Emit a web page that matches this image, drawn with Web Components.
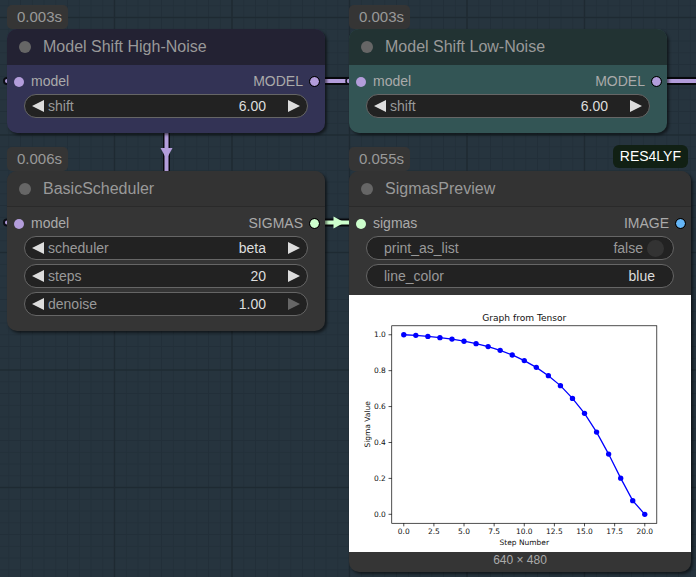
<!DOCTYPE html>
<html lang="en">
<head>
<meta charset="utf-8">
<title>Node graph</title>
<style>
  html, body { margin: 0; height: 100%; }
  body { font-family: "Liberation Sans", Arial, sans-serif; background: #26343e; overflow: hidden; }
</style>
</head>
<body>
<graph-canvas>
  <graph-links></graph-links>
  <graph-node name="Model Shift High-Noise" time="0.003s" style="--x:7px;--y:5px;--w:318px;--head:#232233;--body:#333355;--rule:transparent">
    <node-slots input="model" output="MODEL" style="--in:#b39ddb;--out:#b39ddb"></node-slots>
    <node-widget kind="number" label="shift" value="6.00"></node-widget>
  </graph-node>
  <graph-node name="Model Shift Low-Noise" time="0.003s" style="--x:349px;--y:5px;--w:318px;--head:#223333;--body:#335555;--rule:transparent">
    <node-slots input="model" output="MODEL" style="--in:#b39ddb;--out:#b39ddb"></node-slots>
    <node-widget kind="number" label="shift" value="6.00"></node-widget>
  </graph-node>
  <graph-node name="BasicScheduler" time="0.006s" style="--x:7px;--y:147px;--w:318px">
    <node-slots input="model" output="SIGMAS" style="--in:#b39ddb;--out:#cdffcd"></node-slots>
    <node-widget kind="combo" label="scheduler" value="beta"></node-widget>
    <node-widget kind="number" label="steps" value="20"></node-widget>
    <node-widget kind="number" label="denoise" value="1.00" at-max></node-widget>
  </graph-node>
  <graph-node name="SigmasPreview" time="0.055s" pack="RES4LYF" style="--x:349px;--y:147px;--w:342px">
    <node-slots input="sigmas" output="IMAGE" style="--in:#cdffcd;--out:#64b5f6"></node-slots>
    <node-widget kind="toggle" label="print_as_list" value="false"></node-widget>
    <node-widget kind="text" label="line_color" value="blue"></node-widget>
    <sigma-chart slot="preview"></sigma-chart>
  </graph-node>
</graph-canvas>

<script>
const define = (name, css, render) => customElements.define(name, class extends HTMLElement {
  connectedCallback() {
    if (this.shadowRoot) return;
    const root = this.attachShadow({ mode: "open" });
    root.innerHTML = `<style>:host,*{box-sizing:border-box}${css}</style>${render(this)}`;
  }
});

// Background grid: 20 minor cells per tile, with a major line every 10 drawn on top.
const gridLine = (i, stroke, width) => {
  const p = i * 11.75 + 1;
  return `<path d="M${p} 0V235M0 ${p}H235" stroke="${stroke}" stroke-width="${width}"/>`;
};
const minorLines = Array.from({ length: 20 }, (_, i) => gridLine(i, "#222f39", 1)).join("");
const majorLines = [0, 10].map(i => gridLine(i, "#1e2a32", 1.6)).join("");

define("graph-canvas", `
  :host { display: block; position: relative; width: 100%; min-height: 100vh; overflow: hidden; }
  .grid { position: absolute; inset: 0; width: 100%; height: 100%; }
`, () => `
  <svg class="grid" aria-hidden="true"><defs><pattern id="g" x="-4" y="-101" width="235" height="235" patternUnits="userSpaceOnUse">${minorLines}${majorLines}</pattern></defs>
  <rect width="100%" height="100%" fill="url(#g)"/></svg><slot></slot>`);

define("graph-links", `
  :host { position: absolute; inset: 0; }
  svg { width: 100%; height: 100%; display: block; }
`, () => `
  <svg aria-hidden="true" fill="none">
    <g stroke="#07080c" stroke-width="8"><path d="M314 81H360M656 81H720"/><path d="M166.5 120V180" stroke-width="7"/><path d="M314 222.5H360"/></g>
    <g stroke="#b39ddb" stroke-width="4"><path d="M314 81H360M656 81H720M166.5 120V180"/><path d="M314 222.5H360" stroke="#cdffcd"/></g>
    <path d="M160.5 148H172.5L166.5 159z" fill="#b39ddb"/>
    <path d="M333.5 216.5V228.500L344.5 222.5z" fill="#cdffcd"/>
    <g fill="#b39ddb" stroke="#0b0d14" stroke-width="2"><circle cx="7" cy="81" r="3"/><circle cx="7" cy="222.5" r="3"/><circle cx="349" cy="81" r="3" stroke-width="1.5"/></g>
  </svg>`);

define("graph-node", `
  :host { display: block; position: absolute; left: var(--x); top: var(--y); width: var(--w); color: #999; }
  .badges { display: flex; justify-content: space-between; height: 24px; }
  .time { background: #353535; border-radius: 5px; padding: 0 6px 0 10px; font-size: 15px; line-height: 24px; color: #999; }
  .pack { align-self: center; margin: -5px 3px 0 0; background: #112014; color: #fff; border-radius: 6px; padding: 0 7px; font-size: 14px; line-height: 23px; }
  article { border-radius: 10px; background: var(--body, #353535); box-shadow: 2px 2px 3px rgba(0,0,0,.55); overflow: hidden; }
  header { display: flex; align-items: center; gap: 12px; height: 36px; padding-left: 12px; background: var(--head, #333); border-bottom: 1px solid var(--rule, #2a2a2a); }
  header button { width: 12px; height: 12px; border: 0; padding: 0; border-radius: 50%; background: #666; }
  h2 { margin: 0; font-size: 16px; font-weight: 400; line-height: 20px; }
  .body { display: flex; flex-direction: column; gap: 4px; padding: 4px 17px 15px; }
  :host([pack]) .body { padding-bottom: 7px; }
`, el => `
  <div class="badges"><span class="time">${el.getAttribute("time")}</span>${el.hasAttribute("pack") ? `<span class="pack">${el.getAttribute("pack")}</span>` : ""}</div>
  <article>
    <header><button type="button" aria-label="Collapse node"></button><h2>${el.getAttribute("name")}</h2></header>
    <div class="body"><slot></slot></div>
    <slot name="preview"></slot>
  </article>`);

define("node-slots", `
  :host { display: flex; justify-content: space-between; height: 25px; margin: 0 -11px -4px -11px; padding: 0 0 0 1px; font-size: 14px; line-height: 25px; color: #aaa; }
  span { display: flex; align-items: center; gap: 7px; }
  i { width: 10px; height: 10px; border-radius: 50%; background: var(--in); }
  .out i { background: var(--out); outline: 1px solid #000; width: 9px; height: 9px; }
`, el => `
  <span><i></i>${el.getAttribute("input")}</span>
  <span class="out">${el.getAttribute("output")}<i></i></span>`);

const tri = dir => `<svg width="12" height="12" viewBox="0 0 12 12" aria-hidden="true"><path fill="currentColor" d="${dir < 0 ? "M12 0V12L0 6z" : "M0 0V12L12 6z"}"/></svg>`;
let uid = 0;
define("node-widget", `
  :host { display: flex; align-items: center; height: 24px; border: 1px solid #666; border-radius: 12px; background: #222; padding: 0 7px; font-size: 14px; color: #999; }
  label { margin-left: 4px; line-height: 20px; }
  button { border: 0; padding: 0; background: none; color: #ddd; display: flex; }
  button:disabled { color: #666; }
  input, select { appearance: none; font: inherit; color: #ddd; background: none; border: 0; outline: 0; padding: 0; margin: 0; min-width: 0; flex: 1; width: 40px; text-align: right; text-align-last: right; height: 20px; }
  .stepped { margin-right: 22px; }
  :host([kind=toggle]), :host([kind=text]) { padding: 0 18px 0 13px; }
  :host([kind=toggle]) { padding-right: 9px; }
  output { margin: 0 4px 0 auto; }
  input[type=checkbox] { flex: none; width: 17px; height: 17px; border-radius: 50%; background: #333; }
`, el => {
  const kind = el.getAttribute("kind"), value = el.getAttribute("value"), name = el.getAttribute("label"), id = "w" + uid++;
  const label = `<label for="${id}">${name}</label>`;
  if (kind === "toggle") return `${label}<output for="${id}">${value}</output><input type="checkbox" id="${id}">`;
  if (kind === "text") return `${label}<input type="text" id="${id}" value="${value}">`;
  const field = kind === "combo"
    ? `<select class="stepped" id="${id}"><option>${value}</option></select>`
    : `<input class="stepped" type="text" inputmode="decimal" id="${id}" value="${value}">`;
  return `<button type="button" aria-label="Previous ${name}">${tri(-1)}</button>${label}${field}<button type="button" aria-label="Next ${name}"${el.hasAttribute("at-max") ? " disabled" : ""}>${tri(1)}</button>`;
});

// Chart in its own 640 x 480 user units, scaled to the node's width.
const sigmaY = [74.4,75.5,77.5,79.8,82.5,86.5,91,96.6,103.5,112.2,122.7,135.4,151,169.6,193.5,221.5,256.5,297.7,342.7,384.8,410.4];
const px = i => +(102.5 + i * 22.55).toFixed(2);
define("sigma-chart", `
  :host { display: block; }
  figure { margin: 0; }
  svg { display: block; width: 100%; background: #fff; font-family: "DejaVu Sans", sans-serif; font-size: 14px; }
  text { fill: #111; }
  figcaption { text-align: center; font-size: 12px; line-height: 16px; padding-bottom: 4px; color: #aaa; }
`, () => `
  <figure><svg viewBox="0 0 640 480" role="img" aria-label="Graph from Tensor">
    <text x="328" y="49" font-size="17" text-anchor="middle">Graph from Tensor</text>
    <rect x="80" y="57.6" width="496" height="369.6" fill="none" stroke="#000" stroke-width="1.3"/>
    ${[0,1,2,3,4,5,6,7,8].map(i => `<path d="M${px(i * 2.5)} 427v6" stroke="#000" stroke-width="1.3"/><text x="${px(i * 2.5)}" y="448" text-anchor="middle">${(i * 2.5).toFixed(1)}</text>`).join("")}
    ${[0,1,2,3,4,5].map(i => `<path d="M80 ${410.4 - i * 67.2}h-6" stroke="#000" stroke-width="1.3"/><text x="69" y="${415.4 - i * 67.2}" text-anchor="end">${(i * .2).toFixed(1)}</text>`).join("")}
    <text x="328" y="467" text-anchor="middle">Step Number</text>
    <text transform="translate(39 242) rotate(-90)" text-anchor="middle">Sigma Value</text>
    <polyline fill="none" stroke="#00f" stroke-width="2.4" points="${sigmaY.map((y, i) => px(i) + "," + y).join(" ")}"/>
    ${sigmaY.map((y, i) => `<circle cx="${px(i)}" cy="${y}" r="5" fill="#00f"/>`).join("")}
  </svg><figcaption>640 × 480</figcaption></figure>`);
</script>
</body>
</html>
